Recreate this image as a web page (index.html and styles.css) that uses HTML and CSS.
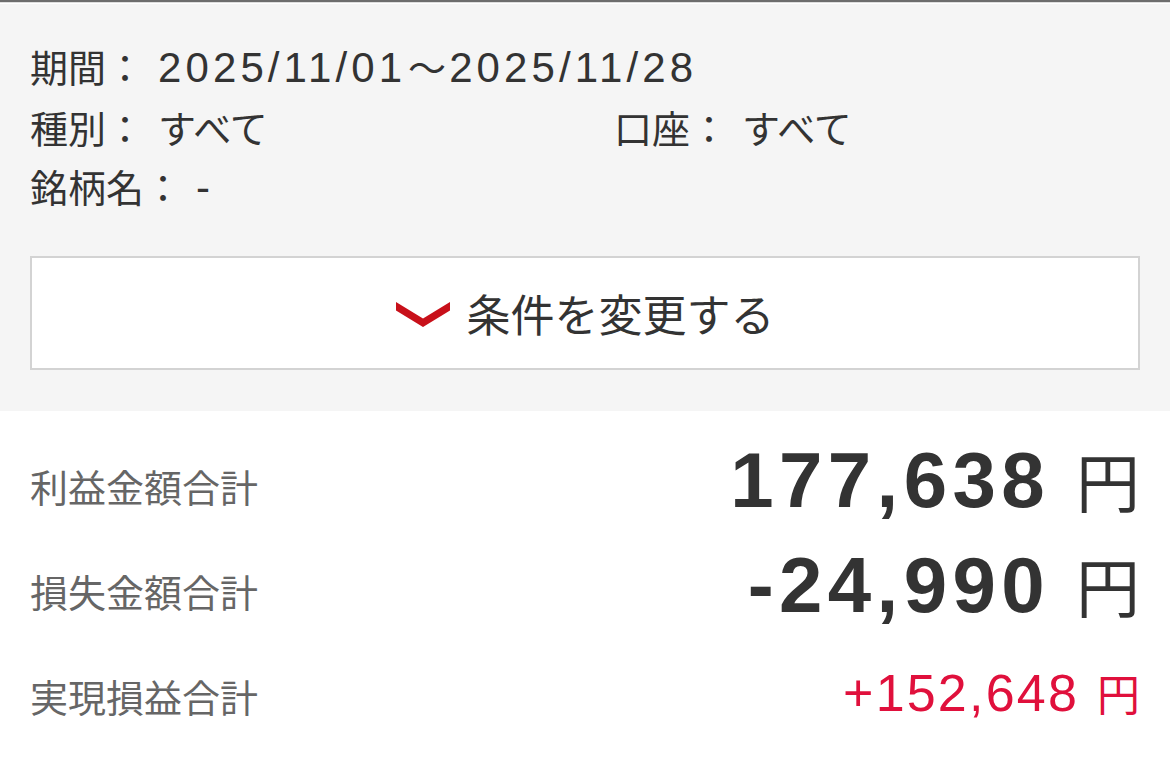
FILE: index.html
```html
<!DOCTYPE html>
<html lang="ja">
<head>
<meta charset="utf-8">
<link rel="stylesheet" href="styles.css">
</head>
<body>
<div class="topline"></div>
<section class="filter">
  <div class="conds">
    <div class="cond wide"><span class="label">期間：</span><span class="value num">2025/11/01<span class="tilde">～</span>2025/11/28</span></div>
    <div class="cond"><span class="label">種別：</span><span class="value">すべて</span></div>
    <div class="cond"><span class="label">口座：</span><span class="value">すべて</span></div>
    <div class="cond wide"><span class="label">銘柄名：</span><span class="value num">-</span></div>
  </div>
  <button class="change" type="button">
    <svg class="chev" width="54" height="25" viewBox="0 0 54 25"><polygon points="0,0 27,16.5 54,0 54,8.5 27,25 0,8.5" fill="#c8101a"/></svg>
    <span>条件を変更する</span>
  </button>
</section>
<section class="summary">
  <div class="row">
    <span class="rlabel">利益金額合計</span>
    <span class="amount"><span class="big">177,638</span><span class="yen">円</span></span>
  </div>
  <div class="row">
    <span class="rlabel">損失金額合計</span>
    <span class="amount"><span class="big">-24,990</span><span class="yen">円</span></span>
  </div>
  <div class="row">
    <span class="rlabel">実現損益合計</span>
    <span class="amount red"><span class="mid">+152,648</span><span class="yen small">円</span></span>
  </div>
</section>
</body>
</html>
```

FILE: styles.css
```css
* { box-sizing: border-box; }
html, body { margin: 0; padding: 0; background: #fff; }
body {
  font-family: "Liberation Sans", "Noto Sans CJK JP", sans-serif;
  color: #333;
  width: 1170px;
}
.topline { height: 2px; background: #6d6d6d; }
.filter {
  background: #f5f5f5;
  box-shadow: inset 0 1px 0 #dedede, inset 0 2px 0 #fff;
  padding: 34px 30px 41px;
}
.conds {
  display: grid;
  grid-template-columns: 584px 1fr;
  font-size: 38px;
  line-height: 59px;
}
.cond { display: flex; align-items: baseline; white-space: nowrap; }
.cond.wide { grid-column: 1 / -1; }
.label { font-family: "Noto Sans CJK JP", sans-serif; }
.value { margin-left: 14px; font-family: "Noto Sans CJK JP", sans-serif; }
.value.num { font-family: "Liberation Sans", "Noto Sans CJK JP", sans-serif; font-size: 42px; letter-spacing: 4.1px; }
.tilde { font-family: "Noto Sans CJK JP", sans-serif; font-size: 38px; letter-spacing: 0; margin: 0 3px 0 2px; }
.change {
  margin-top: 39px;
  width: 100%;
  height: 114px;
  background: #fff;
  border: 2px solid #d3d3d3;
  display: flex;
  align-items: center;
  justify-content: center;
  gap: 17px;
  font-family: "Noto Sans CJK JP", sans-serif;
  font-size: 44px;
  color: #333;
  padding: 0;
}
.chev { display: block; margin-top: 2px; }
.summary { padding: 22px 30px 0; }
.row {
  display: flex;
  justify-content: space-between;
  align-items: center;
  height: 105px;
}
.rlabel {
  font-family: "Noto Sans CJK JP", sans-serif;
  font-size: 38px;
  color: #666;
}
.amount { display: flex; align-items: baseline; white-space: nowrap; margin-bottom: 12px; }
.big {
  font-family: "Liberation Sans", sans-serif;
  font-weight: bold;
  font-size: 78px;
  letter-spacing: 5.4px;
  color: #333;
}
.yen {
  font-family: "Noto Sans CJK JP", sans-serif;
  font-size: 64px;
  margin-left: 26px;
  color: #333;
}
.red .mid, .red .yen { color: #e0103c; }
.mid {
  font-family: "Liberation Sans", sans-serif;
  font-size: 52px;
  letter-spacing: 2.2px;
}
.amount.red { margin-bottom: 8px; }
.yen.small { font-size: 43px; margin-left: 18px; }
```
